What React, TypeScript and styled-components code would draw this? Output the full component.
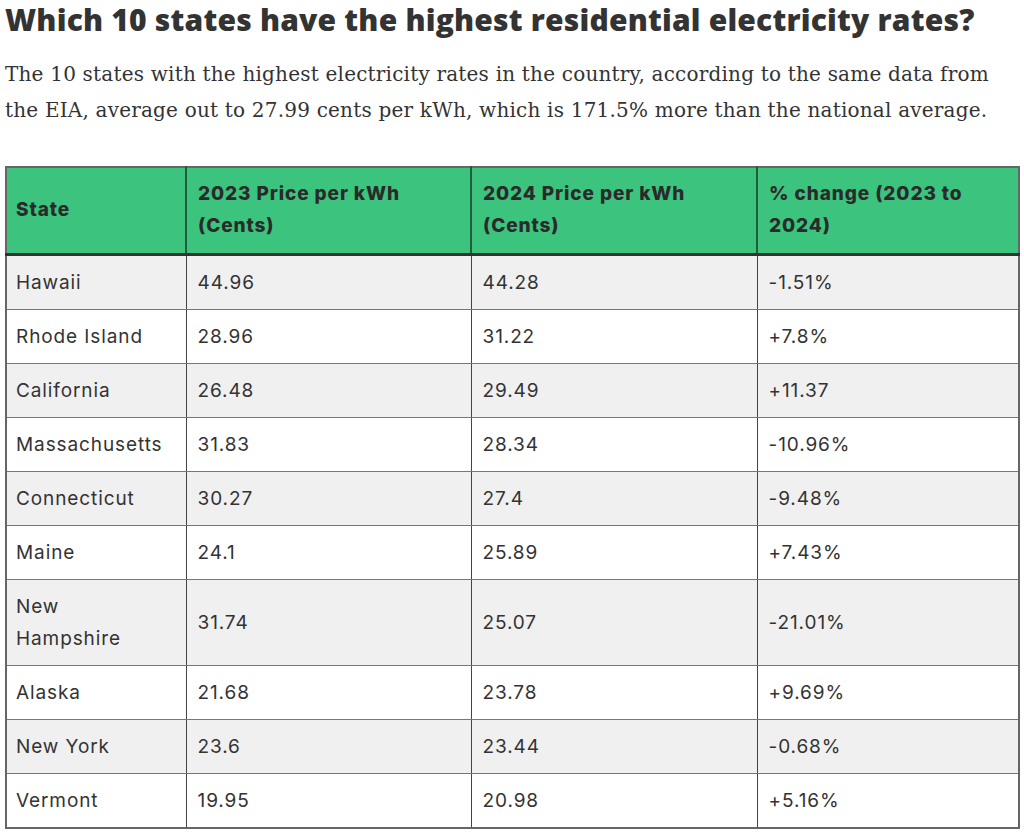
import React from 'react';
import styled, { createGlobalStyle } from 'styled-components';

const GlobalStyle = createGlobalStyle`
    body {
        margin: 0;
        background: #fff;
    }
`;

const Page = styled.div`
    padding: 0 6px 0 5px;
    color: #333;
`;

const Title = styled.h2`
    margin: 0;
    padding-top: 1px;
    font-family: 'Open Sans', sans-serif;
    font-weight: 800;
    font-size: 30px;
    letter-spacing: 0.2px;
    line-height: 37px;
    color: #333;
`;

const Lead = styled.p`
    margin: 18px 0 0;
    font-family: 'DejaVu Serif', 'Liberation Serif', serif;
    font-size: 20px;
    letter-spacing: 0.2px;
    line-height: 36px;
    color: #333;
`;

const Table = styled.table`
    margin-top: 38px;
    width: 100%;
    table-layout: fixed;
    border-collapse: collapse;
    border: 2px solid #666;
    font-family: 'Inter', sans-serif;
    font-size: 19px;
    letter-spacing: 0.9px;
    line-height: 32px;
    color: #333;
`;

const HeadCell = styled.th`
    background: #3cc37e;
    color: #2a2a2a;
    text-align: left;
    font-weight: 800;
    padding: 10px 16px 11px 11px;
    border-left: 2px solid #1f5e3b;
    border-bottom: 3px solid #333;
    vertical-align: middle;
    &:first-child {
        border-left: none;
        padding-left: 9px;
    }
`;

const Row = styled.tr<{ $alt: boolean }>`
    background: ${({ $alt }) => ($alt ? '#f0f0f0' : '#fff')};
`;

const Cell = styled.td`
    padding: 11px 16px 10px 11px;
    border-top: 1px solid #777;
    border-bottom: 1px solid #777;
    border-left: 1px solid #444;
    vertical-align: middle;
    &:first-child {
        padding-left: 9px;
    }
`;

const columns = [180, 285, 286, 262];

const rows = [
    ['Hawaii', '44.96', '44.28', '-1.51%'],
    ['Rhode Island', '28.96', '31.22', '+7.8%'],
    ['California', '26.48', '29.49', '+11.37'],
    ['Massachusetts', '31.83', '28.34', '-10.96%'],
    ['Connecticut', '30.27', '27.4', '-9.48%'],
    ['Maine', '24.1', '25.89', '+7.43%'],
    ['New Hampshire', '31.74', '25.07', '-21.01%'],
    ['Alaska', '21.68', '23.78', '+9.69%'],
    ['New York', '23.6', '23.44', '-0.68%'],
    ['Vermont', '19.95', '20.98', '+5.16%'],
];

const App: React.FC = () => (
    <Page>
        <GlobalStyle />
        <Title>Which 10 states have the highest residential electricity rates?</Title>
        <Lead>
            The 10 states with the highest electricity rates in the country, according to the same data from
            the EIA, average out to 27.99 cents per kWh, which is 171.5% more than the national average.
        </Lead>
        <Table>
            <colgroup>
                {columns.map((w, i) => (
                    <col key={i} style={{ width: w }} />
                ))}
            </colgroup>
            <thead>
                <tr>
                    <HeadCell>State</HeadCell>
                    <HeadCell>2023 Price per kWh (Cents)</HeadCell>
                    <HeadCell>2024 Price per kWh (Cents)</HeadCell>
                    <HeadCell>% change (2023 to 2024)</HeadCell>
                </tr>
            </thead>
            <tbody>
                {rows.map((r, i) => (
                    <Row key={r[0]} $alt={i % 2 === 0}>
                        {r.map((c, j) => (
                            <Cell key={j}>{c}</Cell>
                        ))}
                    </Row>
                ))}
            </tbody>
        </Table>
    </Page>
);

export default App;
